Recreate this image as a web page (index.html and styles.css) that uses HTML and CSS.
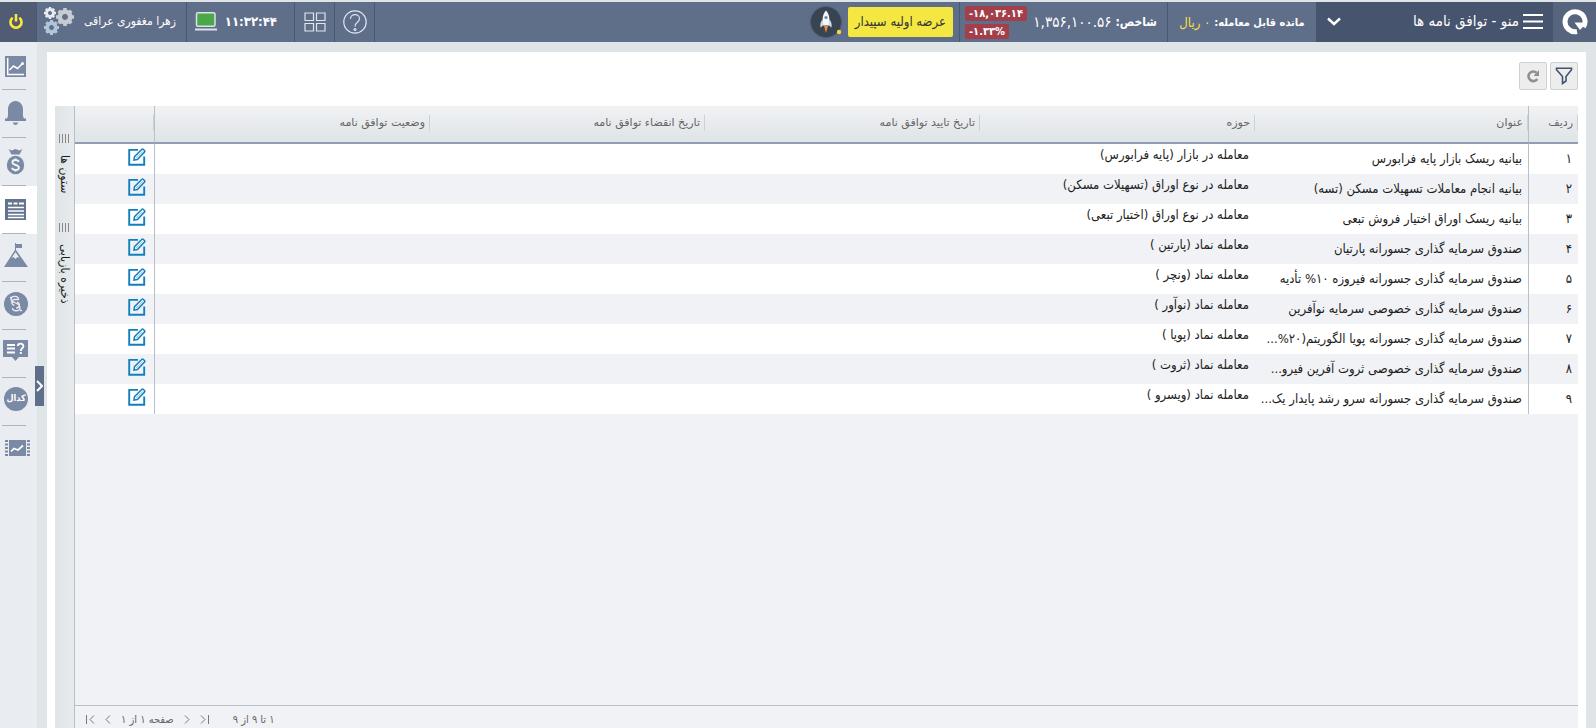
FILE: index.html
```html
<!DOCTYPE html>
<html lang="fa" dir="rtl">
<head>
<meta charset="utf-8">
<title>توافق نامه ها</title>
<link rel="stylesheet" href="styles.css">
</head>
<body>
<svg class="defs" aria-hidden="true">
  <symbol id="edit" viewBox="0 0 18 18"><path d="M10 1.900H1.200v14.900H16.200V8.500" fill="none" stroke="#1280bd" stroke-width="1.900"/><path d="M6 12.200l.5-3.600L14 1.300q.6-.6 1.200 0l1.400 1.400q.6.600 0 1.200L9.400 11.600z" fill="#fff" stroke="#1280bd" stroke-width="1.500"/><path d="M8 10.300l7-7" stroke="#1280bd" stroke-width=".6"/></symbol>
  <symbol id="gear" viewBox="-10 -10 20 20"><path fill="none" stroke="currentColor" stroke-width="5" d="M0-5.800A5.800 5.800 0 1 1-.01-5.800z"/><path stroke="currentColor" stroke-width="4" d="M0-10v4M0 10V6M-10 0h4M10 0H6M-7-7l3 3M7 7L4 4M-7 7l3-3M7-7L4-4"/></symbol>
</svg>
<header class="topbar">
  <a class="logo" href="#" aria-label="خانه"><svg width="26" height="26" viewBox="0 0 26 26"><path d="M21.500 18A10 10 0 1 0 15 22.500" fill="none" stroke="#fff" stroke-width="5"/><path d="M12.500 13.500H25L18 21z" fill="#fff"/></svg></a>
  <button class="menu"><svg width="20" height="15" viewBox="0 0 20 15"><path d="M0 1h20M0 7.500h20M0 14h20" stroke="#fff" stroke-width="2"/></svg><span>منو - توافق نامه ها</span><svg class="caret" width="14" height="9" viewBox="0 0 14 9"><path d="M1 1.500l6 5.500 6-5.500" fill="none" stroke="#fff" stroke-width="2.400"/></svg></button>
  <div class="balance"><b>مانده قابل معامله:</b> <span class="gold">۰ ریال</span></div>
  <div class="index"><b>شاخص:</b><span class="value">۱,۳۵۶,۱۰۰.۵۶</span><span class="changes"><b class="down" dir="ltr">-۱۸,۰۳۶.۱۴</b><b class="down" dir="ltr">-۱.۳۳%</b></span></div>
  <button class="promo">عرضه اولیه سپیدار</button>
  <button class="rocket" aria-label="راکت"><svg width="32" height="34" viewBox="0 0 32 34"><circle cx="16" cy="17" r="15.500" fill="#394452" stroke="#4c5a6d"/><path d="M16 5.500c-3 3-4.200 8-3 15h6c1.200-7 0-12-3-15z" fill="#f4f6fa"/><path d="M12.500 14.500c-2 2-2.500 5-2 8l3-2.500zM19.500 14.500c2 2 2.500 5 2 8l-3-2.500z" fill="#d5dbe5"/><circle cx="16" cy="12.500" r="1.600" fill="#6b86aa"/><path d="M14 21h4l-2 7z" fill="#f08a28"/><circle cx="29" cy="27" r="2.200" fill="#ffd535"/></svg></button>
  <div class="spacer"></div>
  <button class="tool" aria-label="راهنما"><svg width="24" height="24" viewBox="0 0 24 24" fill="none" stroke="#dfe5ee" stroke-width="1.200"><circle cx="12" cy="12" r="11.200"/><path d="M7.500 9c0-6 9-5.500 9-.5 0 4-4.500 3.500-4.500 8"/><circle cx="12" cy="19.500" r="1"/></svg></button>
  <button class="tool" aria-label="چیدمان"><svg width="22" height="20" viewBox="0 0 22 20" fill="none" stroke="#dfe5ee" stroke-width="1.200"><path d="M1 1h8.500v7.500H1zM12.500 1H21v7.500h-8.500zM1 11.500h8.500V19H1zM12.500 11.500H21V19h-8.500z"/></svg></button>
  <div class="clock"><b>۱۱:۳۲:۴۴</b><svg width="22" height="19" viewBox="0 0 22 19"><rect x="1.500" y=".8" width="18.500" height="13.500" rx="1.500" fill="#4aa84b" stroke="#dde1e8" stroke-width="1.500"/><path d="M0 17.500h22" stroke="#dde1e8" stroke-width="2"/></svg></div>
  <button class="user"><span>زهرا مغفوری عراقی</span><svg width="30" height="28" viewBox="0 0 30 28"><g color="#e8ebf0"><use href="#gear" x="0" y="0" width="12" height="12"/></g><g color="#c7cbd3"><use href="#gear" x="12" y="1" width="18" height="18"/></g><g color="#b2c4da"><use href="#gear" x="0" y="13" width="15" height="15"/></g></svg></button>
  <button class="power" aria-label="خروج"><svg width="14" height="16" viewBox="0 0 14 16" fill="none" stroke="#fbe83a" stroke-width="2.600"><path d="M3.700 3.800a5.500 5.500 0 1 0 6.600 0M7 0v7.500"/></svg></button>
</header>
<div class="body">
  <main class="panel">
    <div class="toolbar">
      <button class="square" aria-label="فیلتر"><svg width="18" height="18" viewBox="0 0 18 18"><path d="M1.500 1.200h15v1.500L11 9.500V14l-3.500 2.500v-7L1.500 2.700z" fill="none" stroke="#42536f" stroke-width="1.600"/></svg></button>
      <button class="square" aria-label="بارگذاری"><svg width="14" height="14" viewBox="0 0 14 14"><path d="M11.300 10A4.800 4.800 0 1 1 10.500 3.700" fill="none" stroke="#8d9095" stroke-width="2.600"/><path d="M13 1v6H7.500z" fill="#8d9095"/></svg></button>
    </div>
    <div class="grid">
      <div class="gridmain">
        <table>
          <colgroup><col class="c-num"><col class="c-title"><col><col><col><col><col class="c-act"></colgroup>
          <thead><tr><th><span>ردیف</span></th><th><span>عنوان</span></th><th><span>حوزه</span></th><th><span>تاریخ تایید توافق نامه</span></th><th><span>تاریخ انقضاء توافق نامه</span></th><th><span>وضعیت توافق نامه</span></th><th><span></span></th></tr></thead>
          <tbody>
            <tr><td>۱</td><td>بیانیه ریسک بازار پایه فرابورس</td><td>معامله در بازار (پایه فرابورس)</td><td></td><td></td><td></td><td><button class="edit" aria-label="ویرایش"><svg><use href="#edit"/></svg></button></td></tr>
            <tr><td>۲</td><td>بیانیه انجام معاملات تسهیلات مسکن (تسه)</td><td>معامله در نوع اوراق (تسهیلات مسکن)</td><td></td><td></td><td></td><td><button class="edit" aria-label="ویرایش"><svg><use href="#edit"/></svg></button></td></tr>
            <tr><td>۳</td><td>بیانیه ریسک اوراق اختیار فروش تبعی</td><td>معامله در نوع اوراق (اختیار تبعی)</td><td></td><td></td><td></td><td><button class="edit" aria-label="ویرایش"><svg><use href="#edit"/></svg></button></td></tr>
            <tr><td>۴</td><td>صندوق سرمایه گذاری جسورانه پارتیان</td><td>معامله نماد (پارتین )</td><td></td><td></td><td></td><td><button class="edit" aria-label="ویرایش"><svg><use href="#edit"/></svg></button></td></tr>
            <tr><td>۵</td><td>صندوق سرمایه گذاری جسورانه فیروزه ۱۰% تأدیه</td><td>معامله نماد (ونچر )</td><td></td><td></td><td></td><td><button class="edit" aria-label="ویرایش"><svg><use href="#edit"/></svg></button></td></tr>
            <tr><td>۶</td><td>صندوق سرمایه گذاری خصوصی سرمایه نوآفرین</td><td>معامله نماد (نوآور )</td><td></td><td></td><td></td><td><button class="edit" aria-label="ویرایش"><svg><use href="#edit"/></svg></button></td></tr>
            <tr><td>۷</td><td>صندوق سرمایه گذاری جسورانه پویا الگوریتم(۲۰%...</td><td>معامله نماد (پویا )</td><td></td><td></td><td></td><td><button class="edit" aria-label="ویرایش"><svg><use href="#edit"/></svg></button></td></tr>
            <tr><td>۸</td><td>صندوق سرمایه گذاری خصوصی ثروت آفرین فیرو...</td><td>معامله نماد (ثروت )</td><td></td><td></td><td></td><td><button class="edit" aria-label="ویرایش"><svg><use href="#edit"/></svg></button></td></tr>
            <tr><td>۹</td><td>صندوق سرمایه گذاری جسورانه سرو رشد پایدار یک...</td><td>معامله نماد (ویسرو )</td><td></td><td></td><td></td><td><button class="edit" aria-label="ویرایش"><svg><use href="#edit"/></svg></button></td></tr>
          </tbody>
        </table>
        <footer class="pager">
          <span class="range">۱ تا ۹ از ۹</span>
          <button aria-label="صفحه اول"><svg width="9" height="9" viewBox="0 0 9 9"><path d="M1 .5l4 4-4 4M8.500 0v9"/></svg></button>
          <button aria-label="صفحه قبل"><svg width="6" height="9" viewBox="0 0 6 9"><path d="M1 .5l4 4-4 4"/></svg></button>
          <span>صفحه ۱ از ۱</span>
          <button aria-label="صفحه بعد"><svg width="6" height="9" viewBox="0 0 6 9"><path d="M5 .5l-4 4 4 4"/></svg></button>
          <button aria-label="صفحه آخر"><svg width="9" height="9" viewBox="0 0 9 9"><path d="M8 .5l-4 4 4 4M.5 0v9"/></svg></button>
        </footer>
      </div>
      <div class="strip">
        <button><span class="grip"></span><span class="vertical">ستون ها</span></button>
        <button><span class="grip"></span><span class="vertical">ذخیره بازیابی</span></button>
      </div>
    </div>
  </main>
  <nav class="rail">
    <a href="#" aria-label="نمودار"><svg viewBox="0 0 36 46"><path d="M5 14h21v21H5z" fill="#7a89a4"/><path d="M7.700 16v16.500H24M9.500 28l4-4 4 2.500L23 21" fill="none" stroke="#fff" stroke-width="1.500"/><circle cx="22.500" cy="21.500" r="1.500" fill="#fff"/></svg></a>
    <a href="#" aria-label="اعلان"><svg viewBox="0 0 36 46"><path d="M5 31v-2.500h2c1.500-2 1-6 1-9 0-4.500 3-8.500 7.500-8.500s7.500 4 7.500 8.500c0 3-.5 7 1 9h2V31zM12.500 32.500h6q-3 5-6 0z" fill="#7a89a4"/></svg></a>
    <a href="#" aria-label="سرمایه"><svg viewBox="0 0 36 46"><path d="M8.500 11l3 1.500 4-1.500 4 1.500 3-1.500-3 5.500h-8z" fill="#7a89a4"/><ellipse cx="15.500" cy="27" rx="8.700" ry="9.200" fill="#7a89a4"/><path d="M18.800 24c-1-3-6.600-2.600-6.400.5.200 3 6.500 2 6.500 5 0 3.300-6 3.300-6.900.2M15.500 20.500v1.500M15.500 31.500v2" fill="none" stroke="#f2f4f7" stroke-width="1.900"/></svg></a>
    <a class="active" href="#" aria-label="توافق نامه ها"><svg viewBox="0 0 36 46"><path d="M5 13h21v21H5z" fill="#64748f"/><path d="M8 17.500h4M13.500 17.500h4M19 17.500h5" stroke="#fff" stroke-width="2"/><path d="M8 21.500h16M8 25h16M8 28.500h16M8 31.500h16" stroke="#fff" stroke-width="1.400"/></svg></a>
    <a href="#" aria-label="اهداف"><svg viewBox="0 0 36 46"><path d="M15 9h1v1h6v4h-6v2l12 17H4l11-17z" fill="#7a89a4"/><path d="M11.500 24l4-6 4 6-2-1-2 2-2-2z" fill="#e9edf2"/></svg></a>
    <a href="#" aria-label="پیوند"><svg viewBox="0 0 36 46"><circle cx="16" cy="22" r="12" fill="#7a89a4"/><path d="M15 17.500h3.500c1-3.500-7-4.500-7.500-.5-.3 4.500 9 3 9 8.500 0 4.500-7.500 4-7.500.5M14.500 23.500c-3.500-1-4-6 .5-6.200M17 20c3.500 1 3 6-1 6.200M10 15.500l2 .5M20 28.500h2" fill="none" stroke="#e9edf2" stroke-width="1.300"/></svg></a>
    <a href="#" aria-label="پرسش"><svg viewBox="0 0 36 46"><path d="M3 10h25v17h-9l-3.500 4-3.500-4H3z" fill="#7a89a4"/><path d="M7 15h8M7 18.500h8M7 22.500h8M17.800 16c0-3.500 6-3 5.500.5-.5 2-2.500 2-2.500 4.500M20.800 22v2" fill="none" stroke="#fff" stroke-width="1.900"/></svg></a>
    <a href="#" class="codal"><span>کدال</span></a>
    <a href="#" aria-label="بازار"><svg viewBox="0 0 36 46"><path d="M9 14h17v16H9zM5 14h3v2H5zM5 17.500h3v2H5zM5 21h3v2H5zM5 24.500h3v2H5zM5 28h3v2H5zM27 14h3v2h-3zM27 17.500h3v2h-3zM27 21h3v2h-3zM27 24.500h3v2h-3zM27 28h3v2h-3z" fill="#7a89a4"/><path d="M11 25.500l3-3 4 1.500 5-4.500" fill="none" stroke="#fff" stroke-width="1.700"/></svg></a>
    <button class="handle" aria-label="باز کردن"><svg width="7" height="12" viewBox="0 0 7 12"><path d="M1 1l5 5-5 5" fill="none" stroke="#fff" stroke-width="2"/></svg></button>
  </nav>
</div>
</body>
</html>
```
FILE: styles.css
```css
* { box-sizing: border-box; }
body {
  margin: 0;
  height: 100vh;
  display: flex;
  flex-direction: column;
  overflow: hidden;
  background: #dfe4e7;
  font: 13px "DejaVu Sans Condensed", "DejaVu Sans", sans-serif;
  color: #1d1d22;
}
button { font: inherit; color: inherit; border: 0; padding: 0; background: none; }
a { color: inherit; text-decoration: none; }
.defs { position: absolute; width: 0; height: 0; }
.topbar {
  flex: none;
  display: flex;
  align-items: stretch;
  height: 42px;
  border-top: 2px solid #dfe4e7;
  background: #5f6e89;
  color: #fff;
  white-space: nowrap;
}
.topbar > * { display: flex; align-items: center; }
.logo { width: 43px; justify-content: center; background: #56647e; }
.menu { width: 237px; padding: 0 10px 2px; gap: 4px; background: #46546d; font-size: 15px; }
.caret { margin-right: auto; margin-left: 2px; }
.menu .caret { margin-left: 1px; }
.menu { padding-left: 10px; }
.balance { width: 149px; justify-content: center; gap: 4px; border-left: 1px solid #4a5973; font-size: 11px; }
.gold { color: #f6e04a; font-size: 13px; }
.index { width: 208px; padding: 0 10px 0 0; gap: 4px; border-left: 1px solid #4a5973; font-size: 12px; }
.value { font-size: 15px; }
.changes { display: flex; flex-direction: column; align-items: flex-end; gap: 3px; margin-right: auto; margin-left: 5px; }
.down { padding: 0 4px; border-radius: 2px; background: #a23f4b; font-size: 11px; line-height: 15px; }
.promo { align-self: center; height: 30px; margin: 0 6px; padding: 0 7px 2px; border-radius: 2px; background: #f4e742; color: #333; }
.spacer { flex: 1; }
.tool { width: 40px; justify-content: center; border-left: 1px solid #4a5973; }
.spacer + .tool { width: 41px; border-right: 1px solid #4a5973; }
.clock { width: 108px; justify-content: space-between; padding: 0 17px 2px 8px; border-left: 1px solid #4a5973; }
.user { width: 149px; justify-content: space-between; padding: 0 10px 2px 7px; font-size: 12px; }
.power { width: 37px; justify-content: center; padding-right: 4px; background: #4f5c73; border-right: 1px solid #4a5973; }
.body { flex: 1; display: flex; min-height: 0; }
.rail { position: relative; flex: none; width: 37px; background: #e9edf2; }
.rail a { position: relative; display: block; height: 48px; }
.rail a::after { content: ""; position: absolute; right: 11px; bottom: 0; width: 24px; height: 1px; background: #b0b3b8; }
.rail a:nth-child(9)::after { display: none; }
.rail a.active { background: #fff; }
.rail svg { display: block; }
.rail a svg { width: 36px; height: 46px; margin-right: 1px; }
.codal span { display: block; width: 24px; height: 24px; margin-right: 9px; border-radius: 50%; background: #7a89a4; color: #fff; text-align: center; font-size: 9px; font-weight: bold; line-height: 22px; }
.rail .codal { padding-top: 9px; }
.handle { position: absolute; top: 324px; right: -7px; width: 9px; height: 40px; display: flex; align-items: center; justify-content: center; background: #5f6e89; }
.panel { flex: 1; min-width: 0; display: flex; flex-direction: column; margin: 10px 10px -7px; padding: 10px 8px 0; background: #fff; }
.toolbar { display: flex; gap: 3px; }
.square { width: 28px; height: 28px; display: flex; align-items: center; justify-content: center; border: 1px solid #cfd0d3; border-radius: 2px; background: #ededee; }
.grid { flex: 1; display: flex; min-height: 0; margin-top: 16px; }
.gridmain { flex: 1; min-width: 0; display: flex; flex-direction: column; border-left: 1px solid #b9bfc6; background: #f1f2f6; }
table { width: 100%; table-layout: fixed; border-collapse: separate; border-spacing: 0; }
.c-num { width: 50px; }
.c-title { width: 273px; }
.c-act { width: 80px; }
th { height: 38px; padding: 0 0 2px; border-bottom: 2px solid #919db3; background: linear-gradient(#f1f2f4, #dfe4e7); color: #666; font-family: "DejaVu Sans", sans-serif; font-size: 11px; font-weight: normal; text-align: right; }
th span { display: block; height: 16px; padding-right: 4px; border-right: 1px solid #cdd0d4; line-height: 16px; }
td { height: 30px; padding: 0 6px; background: #fff; line-height: 20px; white-space: nowrap; overflow: hidden; }
td:nth-child(3) { padding-bottom: 8px; }
tr:nth-child(even) td { background: #f1f2f6; }
th:first-child, td:first-child { border-left: 1px solid #b9bfc6; }
th:last-child, td:last-child { border-right: 1px solid #b9bfc6; }
td:last-child { padding: 0 8px 4px 0; }
.edit, .edit svg { display: block; width: 18px; height: 18px; }
.pager { display: flex; align-items: center; justify-content: flex-end; gap: 10px; height: 30px; margin-top: auto; padding: 0 0 2px 11px; border-top: 1px solid #b9bfc6; color: #666; font-size: 11px; }
.pager svg { display: block; fill: none; stroke: #777; }
.range { margin-left: 14px; }
.strip { width: 19px; display: flex; flex-direction: column; align-items: center; gap: 30px; padding-top: 28px; background: linear-gradient(90deg, #dfe4e7, #e8ebed); }
.strip button { display: flex; flex-direction: column; align-items: center; gap: 12px; }
.vertical { writing-mode: vertical-rl; font-size: 12px; line-height: 16px; white-space: nowrap; }
.grip { width: 11px; height: 9px; background: repeating-linear-gradient(90deg, #888 0 1px, transparent 1px 3px); }
```
